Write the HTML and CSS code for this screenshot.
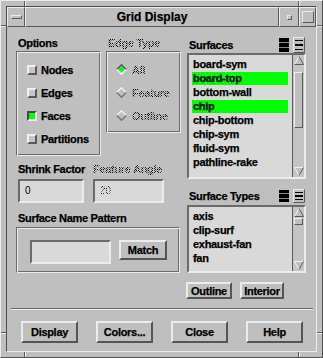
FILE: index.html
```html
<!DOCTYPE html>
<html>
<head>
<meta charset="utf-8">
<title>Grid Display</title>
<link rel="stylesheet" href="styles.css">
</head>
<body>
<div class="window">
  <span class="hdl hdl-t1"></span><span class="hdl hdl-t2"></span>
  <span class="hdl hdl-b1"></span><span class="hdl hdl-b2"></span>
  <span class="hdl hdl-l1"></span><span class="hdl hdl-l2"></span>
  <span class="hdl hdl-r1"></span><span class="hdl hdl-r2"></span>
  <div class="inner">
    <div class="titlebar">
      <div class="tb-cell tb-menu"><span class="menu-bar"></span></div>
      <div class="tb-cell tb-title">Grid Display</div>
      <div class="tb-cell tb-min"><span class="min-box"></span></div>
      <div class="tb-cell tb-max"><span class="max-box"></span></div>
    </div>
    <div class="client">
      <div class="main">
        <div class="col-left">
          <div class="lab-row">
            <div class="lab lab-opts">Options</div>
            <div class="lab"><span class="dis">Edge Type</span></div>
          </div>
          <div class="opts-row">
            <div class="etched frame-opts">
              <div class="chk-row"><span class="cb"></span>Nodes</div>
              <div class="chk-row"><span class="cb"></span>Edges</div>
              <div class="chk-row"><span class="cb on"></span>Faces</div>
              <div class="chk-row"><span class="cb"></span>Partitions</div>
            </div>
            <div class="etched frame-edge">
              <div class="chk-row rad-row">
                <svg class="rad" width="11" height="11" viewBox="0 0 11 11"><polygon points="5.5,0 11,5.5 5.5,11 0,5.5" fill="#bfbfbf"/><polyline points="0.8,5.5 5.5,0.8 10.2,5.5" fill="none" stroke="#555" stroke-width="1.5"/><polyline points="0.8,5.5 5.5,10.2 10.2,5.5" fill="none" stroke="#f0f0f0" stroke-width="1.5"/><polygon points="5.5,2.6 8.4,5.5 5.5,8.4 2.6,5.5" fill="#00ff00"/></svg>
                <span class="dis">All</span>
              </div>
              <div class="chk-row rad-row">
                <svg class="rad" width="11" height="11" viewBox="0 0 11 11"><polygon points="5.5,0 11,5.5 5.5,11 0,5.5" fill="#bfbfbf"/><polyline points="0.8,5.5 5.5,0.8 10.2,5.5" fill="none" stroke="#f0f0f0" stroke-width="1.5"/><polyline points="0.8,5.5 5.5,10.2 10.2,5.5" fill="none" stroke="#777" stroke-width="1.5"/></svg>
                <span class="dis">Feature</span>
              </div>
              <div class="chk-row rad-row">
                <svg class="rad" width="11" height="11" viewBox="0 0 11 11"><polygon points="5.5,0 11,5.5 5.5,11 0,5.5" fill="#bfbfbf"/><polyline points="0.8,5.5 5.5,0.8 10.2,5.5" fill="none" stroke="#f0f0f0" stroke-width="1.5"/><polyline points="0.8,5.5 5.5,10.2 10.2,5.5" fill="none" stroke="#777" stroke-width="1.5"/></svg>
                <span class="dis">Outline</span>
              </div>
            </div>
          </div>
          <div class="pair lab-pair">
            <div class="lab w-shrink">Shrink Factor</div>
            <div class="lab w-angle"><span class="dis">Feature Angle</span></div>
          </div>
          <div class="pair inp-pair">
            <div class="field w-shrink">0</div>
            <div class="field w-angle"><span class="dis dis-thin">20</span></div>
          </div>
          <div class="lab lab-pattern">Surface Name Pattern</div>
          <div class="etched frame-pattern">
            <div class="field field-pattern"></div>
            <div class="btn btn-match">Match</div>
          </div>
        </div>
        <div class="col-right">
          <div class="rhead">
            <div class="lab">Surfaces</div>
            <div class="icons">
              <svg width="12" height="16" viewBox="0 0 12 16"><rect x="0" y="0" width="12" height="16" fill="#bfbfbf"/><rect x="1" y="1" width="10" height="14" fill="#000"/><rect x="1" y="5" width="10" height="1" fill="#8a8a8a"/><rect x="1" y="10" width="10" height="1" fill="#8a8a8a"/></svg>
              <svg width="12" height="16" viewBox="0 0 12 16"><rect x="0" y="0" width="12" height="16" fill="#bfbfbf"/><path d="M0.5 15.5V0.5H11.5" fill="none" stroke="#ececec"/><path d="M0.5 15.5H11.5V0.5" fill="none" stroke="#5a5a5a"/><rect x="2" y="3" width="8" height="1" fill="#000"/><rect x="2" y="7" width="8" height="2" fill="#000"/><rect x="2" y="12" width="8" height="1" fill="#000"/></svg>
            </div>
          </div>
          <div class="list list-surf">
            <div class="items">
              <div class="item">board-sym</div>
              <div class="item sel">board-top</div>
              <div class="item">bottom-wall</div>
              <div class="item sel">chip</div>
              <div class="item">chip-bottom</div>
              <div class="item">chip-sym</div>
              <div class="item">fluid-sym</div>
              <div class="item">pathline-rake</div>
            </div>
            <div class="sb">
              <svg class="arr-up" width="10" height="9" viewBox="0 0 10 9"><polygon points="5,0.5 9.5,8.5 0.5,8.5" fill="#bfbfbf"/><polyline points="0.5,8.5 5,0.5" fill="none" stroke="#f0f0f0"/><polyline points="5,0.5 9.5,8.5 0.5,8.5" fill="none" stroke="#5a5a5a"/></svg>
              <div class="thumb thumb-surf"></div>
              <svg class="arr-dn" width="10" height="9" viewBox="0 0 10 9"><polygon points="0.5,0.5 9.5,0.5 5,8.5" fill="#bfbfbf"/><polyline points="5,8.5 0.5,0.5 9.5,0.5" fill="none" stroke="#f0f0f0"/><polyline points="9.5,0.5 5,8.5" fill="none" stroke="#5a5a5a"/></svg>
            </div>
          </div>
          <div class="rhead rhead-types">
            <div class="lab">Surface Types</div>
            <div class="icons">
              <svg width="12" height="14" viewBox="0 0 12 14"><rect x="0" y="0" width="12" height="14" fill="#bfbfbf"/><rect x="1" y="1" width="10" height="12" fill="#000"/><rect x="1" y="4" width="10" height="1" fill="#8a8a8a"/><rect x="1" y="9" width="10" height="1" fill="#8a8a8a"/></svg>
              <svg width="12" height="14" viewBox="0 0 12 14"><rect x="0" y="0" width="12" height="14" fill="#bfbfbf"/><path d="M0.5 13.5V0.5H11.5" fill="none" stroke="#ececec"/><path d="M0.5 13.5H11.5V0.5" fill="none" stroke="#5a5a5a"/><rect x="2" y="3" width="8" height="1" fill="#000"/><rect x="2" y="6" width="8" height="2" fill="#000"/><rect x="2" y="10" width="8" height="1" fill="#000"/></svg>
            </div>
          </div>
          <div class="list list-types">
            <div class="items">
              <div class="item">axis</div>
              <div class="item">clip-surf</div>
              <div class="item">exhaust-fan</div>
              <div class="item">fan</div>
            </div>
            <div class="sb">
              <svg class="arr-up" width="10" height="9" viewBox="0 0 10 9"><polygon points="5,0.5 9.5,8.5 0.5,8.5" fill="#bfbfbf"/><polyline points="0.5,8.5 5,0.5" fill="none" stroke="#f0f0f0"/><polyline points="5,0.5 9.5,8.5 0.5,8.5" fill="none" stroke="#5a5a5a"/></svg>
              <div class="thumb thumb-types"></div>
              <svg class="arr-dn" width="10" height="9" viewBox="0 0 10 9"><polygon points="0.5,0.5 9.5,0.5 5,8.5" fill="#bfbfbf"/><polyline points="5,8.5 0.5,0.5 9.5,0.5" fill="none" stroke="#f0f0f0"/><polyline points="9.5,0.5 5,8.5" fill="none" stroke="#5a5a5a"/></svg>
            </div>
          </div>
          <div class="type-btns">
            <div class="btn btn-outline">Outline</div>
            <div class="btn btn-interior">Interior</div>
          </div>
        </div>
      </div>
      <div class="sep"></div>
      <div class="actions">
        <div class="btn btn-act">Display</div>
        <div class="btn btn-act">Colors...</div>
        <div class="btn btn-act">Close</div>
        <div class="btn btn-act">Help</div>
      </div>
    </div>
  </div>
</div>
</body>
</html>
```

FILE: styles.css
```css
* { box-sizing: border-box; }

body {
  margin: 0;
  background: #bfbfbf;
  font-family: "Liberation Sans", Arial, sans-serif;
  font-size: 11px;
  font-weight: bold;
  letter-spacing: -0.3px;
  color: #000;
  -webkit-text-stroke: 0.25px currentColor;
}

.window {
  position: relative;
  width: 323px;
  height: 358px;
  background: #bfbfbf;
  border: 1px solid;
  border-color: #ececec #4e4e4e #4e4e4e #ececec;
  padding: 5px;
}

/* frame resize-handle notches */
.hdl { position: absolute; background: #5a5a5a; }
.hdl-t1, .hdl-t2, .hdl-b1, .hdl-b2 { width: 1px; height: 5px; box-shadow: 1px 0 #ececec; }
.hdl-t1 { left: 23px; top: 0; }
.hdl-t2 { left: 297px; top: 0; }
.hdl-b1 { left: 23px; bottom: 0; }
.hdl-b2 { left: 297px; bottom: 0; }
.hdl-l1, .hdl-l2, .hdl-r1, .hdl-r2 { width: 5px; height: 1px; box-shadow: 0 1px #ececec; }
.hdl-l1 { left: 0; top: 24px; }
.hdl-l2 { left: 0; top: 331px; }
.hdl-r1 { right: 0; top: 24px; }
.hdl-r2 { right: 0; top: 331px; }

.inner {
  height: 100%;
  border: 1px solid;
  border-color: #4e4e4e #ececec #ececec #4e4e4e;
  display: flex;
  flex-direction: column;
}

/* title bar */
.titlebar { display: flex; height: 20px; }
.tb-cell {
  border: 1px solid;
  border-color: #ececec #5a5a5a #5a5a5a #ececec;
  display: flex;
  align-items: center;
  justify-content: center;
}
.tb-menu { width: 18px; }
.tb-title { width: 254px; font-size: 12px; letter-spacing: 0; }
.tb-min { width: 20px; }
.tb-max { width: 17px; }

.menu-bar {
  width: 11px;
  height: 4px;
  border: 1px solid;
  border-color: #ececec #5a5a5a #5a5a5a #ececec;
}
.min-box {
  width: 5px;
  height: 5px;
  border: 1px solid;
  border-color: #ececec #5a5a5a #5a5a5a #ececec;
}
.max-box {
  width: 12px;
  height: 12px;
  border: 1px solid;
  border-color: #ececec #5a5a5a #5a5a5a #ececec;
}

/* client */
.client { flex: 1; display: flex; flex-direction: column; }
.main { display: flex; gap: 6px; padding: 9px 0 0 9px; }
.col-left { width: 165px; display: flex; flex-direction: column; }
.col-right { width: 119px; display: flex; flex-direction: column; }

.lab { height: 14px; line-height: 14px; white-space: nowrap; }
.lab-row { display: flex; }
.lab-opts { width: 90px; padding-left: 2px; }
.lab-row .lab:last-child { padding-left: 2px; }

.dis {
  display: inline-block;
  color: transparent;
  -webkit-text-stroke: 0;
  background: repeating-conic-gradient(#000 0 25%, transparent 0 50%) 0 0 / 2px 2px;
  -webkit-background-clip: text;
  background-clip: text;
}
.dis-thin { font-weight: normal; }

.etched {
  border: 1px solid;
  border-color: #6a6a6a #ececec #ececec #6a6a6a;
  box-shadow: inset 1px 1px #ececec, inset -1px -1px #6a6a6a;
}

.opts-row { display: flex; gap: 5px; align-items: flex-start; margin-top: 1px; }
.frame-opts { width: 85px; height: 105px; padding: 6px 0 0 10px; }
.frame-edge { width: 75px; height: 82px; padding: 6px 0 0 9px; }

.chk-row { display: flex; align-items: center; height: 23px; gap: 4px; white-space: nowrap; }
.rad-row { gap: 5px; }
.rad { display: block; flex: none; }

.cb {
  width: 10px;
  height: 10px;
  flex: none;
  border: 2px solid;
  border-color: #f0f0f0 #5a5a5a #5a5a5a #f0f0f0;
  background: #c6c6c6;
}
.cb.on {
  border-color: #4a4a4a #f0f0f0 #f0f0f0 #4a4a4a;
  background: #00ff00;
}

.pair { display: flex; gap: 9px; padding-left: 2px; }
.lab-pair { margin-top: 6px; }
.inp-pair { margin-top: 3px; }
.w-shrink { width: 66px; }
.w-angle { width: 71px; }

.field {
  height: 24px;
  border: 2px solid;
  border-color: #6a6a6a #ececec #ececec #6a6a6a;
  background: #d9d9d9;
  font-weight: normal;
  font-size: 10px;
  letter-spacing: 0;
  line-height: 20px;
  padding-left: 5px;
  -webkit-text-stroke: 0;
}

.lab-pattern { margin-top: 8px; padding-left: 2px; }
.frame-pattern {
  margin-top: 2px;
  width: 164px;
  height: 46px;
  padding: 12px 0 0 13px;
  display: flex;
  align-items: flex-start;
  gap: 8px;
}
.field-pattern { width: 81px; }

.btn {
  border: 2px solid;
  border-color: #ececec #555 #555 #ececec;
  background: #bfbfbf;
  display: flex;
  align-items: center;
  justify-content: center;
  white-space: nowrap;
}
.btn-match { width: 48px; height: 20px; }

/* right column */
.rhead {
  display: flex;
  height: 17px;
  align-items: center;
  justify-content: space-between;
  padding: 0 1px 0 2px;
}
.icons { display: flex; gap: 3px; }
.icons svg { display: block; }
.rhead-types { margin-top: 8px; }

.list {
  display: flex;
  border: 2px solid;
  border-color: #6a6a6a #ececec #ececec #6a6a6a;
  margin-top: 0;
}
.list-surf { height: 126px; }
.list-types { height: 68px; margin-top: 1px; }

.items {
  width: 103px;
  background: #d9d9d9;
  padding: 2px 4px 0 3px;
  overflow: hidden;
}
.item {
  height: 13px;
  line-height: 13px;
  margin: 1px 0;
  padding-left: 1px;
  white-space: nowrap;
}
.item.sel { background: #00ff00; }

.sb {
  width: 12px;
  border-left: 1px solid #5a5a5a;
  background: #c4c4c4;
  display: flex;
  flex-direction: column;
  align-items: center;
}
.arr-up { display: block; margin-top: 1px; flex: none; }
.arr-dn { display: block; margin-top: auto; margin-bottom: 1px; flex: none; }
.thumb {
  width: 9px;
  border: 1px solid;
  border-color: #f0f0f0 #5a5a5a #5a5a5a #f0f0f0;
  background: #bfbfbf;
  flex: none;
}
.thumb-surf { margin-top: 7px; height: 56px; }
.thumb-types { margin-top: 1px; height: 7px; }

.type-btns { display: flex; gap: 8px; margin-top: 9px; margin-left: -1px; }
.btn-outline { width: 46px; height: 17px; }
.btn-interior { width: 44px; height: 17px; }

.sep {
  height: 2px;
  margin: 9px 3px 0 4px;
  border-top: 1px solid #6a6a6a;
  border-bottom: 1px solid #ececec;
}

.actions { display: flex; gap: 18px; padding-left: 14px; margin-top: 11px; }
.btn-act { width: 57px; height: 22px; }
```
